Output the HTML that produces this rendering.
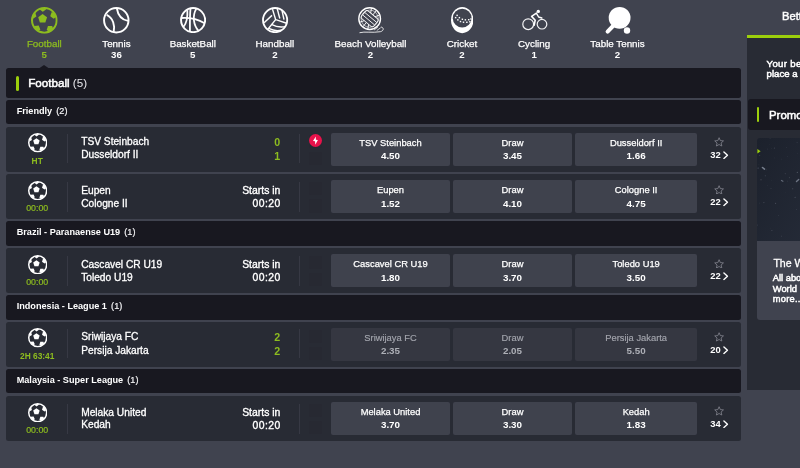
<!DOCTYPE html><html><head><meta charset="utf-8"><title>Sportsbook</title><style>
html,body{margin:0;padding:0;}body{width:800px;height:468px;overflow:hidden;background:#40434f;font-family:"Liberation Sans",Arial,sans-serif;position:relative;}
#pg{position:absolute;left:0;top:0;width:800px;height:468px;overflow:hidden;will-change:transform;}
.b{position:absolute;box-sizing:border-box}.t{position:absolute;white-space:nowrap;box-sizing:border-box}
</style></head><body><div id="pg">
<svg width="0" height="0" style="position:absolute"><defs><symbol id="fb" viewBox="0 0 100 100"><circle cx="50" cy="50" r="46.2" fill="none" stroke="currentColor" stroke-width="7.6"/><polygon points="43.5,26.5 60.1,38.6 53.8,58.2 33.2,58.2 26.9,38.6" fill="currentColor"/><clipPath id="fbc"><circle cx="50" cy="50" r="46"/></clipPath><g clip-path="url(#fbc)" fill="currentColor"><polygon points="72.1,34.8 77.1,19.7 92.9,19.7 97.8,34.8 85.0,44.1"/><polygon points="63.5,71.1 79.4,70.9 84.4,86.0 71.6,95.4 58.7,86.2"/><polygon points="28.7,69.5 35.1,84.1 23.3,94.6 9.6,86.7 12.9,71.2"/><polygon points="20.2,35.7 7.6,44.3 -4.5,34.9 0.6,20.6 15.9,21.0"/><polygon points="44.2,17.8 32.5,8.9 37.4,-5.0 52.1,-4.6 56.3,9.5"/></g></symbol><symbol id="star" viewBox="0 0 100 98"><path d="M50 7 L62.5 36 L94 39 L70 60 L77.5 91 L50 75 L22.5 91 L30 60 L6 39 L37.5 36 Z" fill="none" stroke="#858791" stroke-width="8" stroke-linejoin="round"/></symbol><symbol id="chev" viewBox="0 0 6 9"><path d="M1 1 L4.8 4.5 L1 8" fill="none" stroke="#fff" stroke-width="1.5" stroke-linecap="round" stroke-linejoin="round"/></symbol></defs></svg>
<div class="t" style="top:37px;height:13px;line-height:13px;font-size:9.8px;color:#8dbc1f;-webkit-text-stroke:0.25px #8dbc1f;left:-105.7px;width:300px;text-align:center;">Football</div>
<div class="t" style="top:48px;height:13px;line-height:13px;font-size:9.7px;color:#8dbc1f;font-weight:700;left:-105.7px;width:300px;text-align:center;">5</div>
<div class="t" style="top:37px;height:13px;line-height:13px;font-size:9.8px;color:#fff;-webkit-text-stroke:0.25px #fff;left:-33.6px;width:300px;text-align:center;">Tennis</div>
<div class="t" style="top:48px;height:13px;line-height:13px;font-size:9.7px;color:#fff;font-weight:700;left:-33.6px;width:300px;text-align:center;">36</div>
<div class="t" style="top:37px;height:13px;line-height:13px;font-size:9.8px;color:#fff;-webkit-text-stroke:0.25px #fff;left:42.8px;width:300px;text-align:center;">BasketBall</div>
<div class="t" style="top:48px;height:13px;line-height:13px;font-size:9.7px;color:#fff;font-weight:700;left:42.8px;width:300px;text-align:center;">5</div>
<div class="t" style="top:37px;height:13px;line-height:13px;font-size:9.8px;color:#fff;-webkit-text-stroke:0.25px #fff;left:124.9px;width:300px;text-align:center;">Handball</div>
<div class="t" style="top:48px;height:13px;line-height:13px;font-size:9.7px;color:#fff;font-weight:700;left:124.9px;width:300px;text-align:center;">2</div>
<div class="t" style="top:37px;height:13px;line-height:13px;font-size:9.8px;color:#fff;-webkit-text-stroke:0.25px #fff;left:220.5px;width:300px;text-align:center;">Beach Volleyball</div>
<div class="t" style="top:48px;height:13px;line-height:13px;font-size:9.7px;color:#fff;font-weight:700;left:220.5px;width:300px;text-align:center;">2</div>
<div class="t" style="top:37px;height:13px;line-height:13px;font-size:9.8px;color:#fff;-webkit-text-stroke:0.25px #fff;left:312px;width:300px;text-align:center;">Cricket</div>
<div class="t" style="top:48px;height:13px;line-height:13px;font-size:9.7px;color:#fff;font-weight:700;left:312px;width:300px;text-align:center;">2</div>
<div class="t" style="top:37px;height:13px;line-height:13px;font-size:9.8px;color:#fff;-webkit-text-stroke:0.25px #fff;left:384.1px;width:300px;text-align:center;">Cycling</div>
<div class="t" style="top:48px;height:13px;line-height:13px;font-size:9.7px;color:#fff;font-weight:700;left:384.1px;width:300px;text-align:center;">1</div>
<div class="t" style="top:37px;height:13px;line-height:13px;font-size:9.8px;color:#fff;-webkit-text-stroke:0.25px #fff;left:467.5px;width:300px;text-align:center;">Table Tennis</div>
<div class="t" style="top:48px;height:13px;line-height:13px;font-size:9.7px;color:#fff;font-weight:700;left:467.5px;width:300px;text-align:center;">2</div>
<svg class="b" style="left:31.1px;top:7.1px;color:#8dbc1f" width="26.7" height="26.7"><use href="#fb"/></svg>
<svg class="b" style="left:103.3px;top:7px" width="26.6" height="26.6" viewBox="0 0 100 100"><g fill="none" stroke="#fff" stroke-width="7.2"><circle cx="50" cy="50" r="46"/><path d="M14 30 C38 42 46 70 40 94"/><path d="M52 5 C56 30 72 48 94 52"/></g></svg>
<svg class="b" style="left:180.2px;top:7px" width="26.2" height="26.2" viewBox="0 0 100 100"><g fill="none" stroke="#fff" stroke-width="6.8"><circle cx="50" cy="50" r="46" stroke-width="7.4"/><path d="M40 6 C37 40 38 70 38 95"/><path d="M6 42 C40 40 70 48 94 62"/><path d="M62 7 C46 34 52 70 70 90"/><path d="M28 12 C30 40 22 66 12 78"/></g></svg>
<svg class="b" style="left:262.4px;top:7px" width="26.2" height="26.2" viewBox="0 0 100 100"><g fill="none" stroke="#fff" stroke-width="5.4"><circle cx="50" cy="50" r="46.2" stroke-width="7"/><path d="M40 8 L52 48 L94 62"/><path d="M52 48 L20 88"/><path d="M58 6 L68 44"/><path d="M76 12 L84 48"/><path d="M8 60 L38 32"/><path d="M36 66 C55 76 75 78 90 74"/><path d="M26 82 C45 92 62 92 76 88"/></g></svg>
<svg class="b" style="left:357.5px;top:7px" width="28.2" height="27.5" viewBox="0 0 121 118"><g fill="none" stroke="#fff"><circle cx="50" cy="50" r="46.5" stroke-width="6"/><circle cx="50" cy="50" r="37" stroke-width="2.6"/><path d="M53.1 32.3 L57.8 5.7" stroke-width="4"/><path d="M61.6 36.2 L78.9 15.5" stroke-width="4"/><path d="M66.9 43.8 L92.3 34.6" stroke-width="4"/><path d="M46.9 67.7 L42.2 94.3" stroke-width="4"/><path d="M38.4 63.8 L21.1 84.5" stroke-width="4"/><path d="M33.1 56.2 L7.7 65.4" stroke-width="4"/><g transform="rotate(40 50 50)"><rect x="16" y="28.5" width="68" height="43" rx="9" fill="#40434f" stroke-width="4"/><path d="M17 43 H83 M17 57 H83" stroke-width="3.6"/></g><path d="M8 110 C30 104 60 112 96 106 C112 102 112 88 100 86" stroke-width="3.6" stroke-linecap="round"/><path d="M70 98 L84 88 M82 100 L96 90" stroke-width="3" stroke-linecap="round"/></g></svg>
<svg class="b" style="left:451px;top:7.4px" width="22.4" height="26.2" viewBox="0 0 90 105"><ellipse cx="45" cy="52.5" rx="45" ry="52.5" fill="#fff"/><circle cx="45" cy="44.6" r="37.8" fill="#40434f"/><g fill="#fff"><rect x="21.7" y="30.7" width="5.8" height="5.8"/><rect x="30.8" y="39.7" width="5.8" height="5.8"/><rect x="42.8" y="46.3" width="5.8" height="5.8"/><rect x="54.9" y="48.6" width="5.8" height="5.8"/><rect x="68.4" y="48.1" width="5.8" height="5.8"/><rect x="77.5" y="45.1" width="5.8" height="5.8"/><rect x="15.7" y="39.7" width="5.8" height="5.8"/><rect x="24.7" y="48.7" width="5.8" height="5.8"/><rect x="35.3" y="55.4" width="5.8" height="5.8"/><rect x="47.3" y="58.1" width="5.8" height="5.8"/><rect x="60.9" y="58.4" width="5.8" height="5.8"/><rect x="73.0" y="56.4" width="5.8" height="5.8"/></g></svg>
<svg class="b" style="left:521px;top:8px" width="28" height="24" viewBox="0 0 28 24"><g fill="none" stroke="#f2f2f4" stroke-width="1.2"><circle cx="7.2" cy="16.2" r="5.4"/><circle cx="21" cy="16.2" r="4.8"/></g><circle cx="17.3" cy="3.4" r="1.7" fill="#fff"/><path d="M15.4 5.2 L10.6 8.4 L14.2 12.2 L13.2 17.2" fill="none" stroke="#fff" stroke-width="1.6" stroke-linejoin="round" stroke-linecap="round"/><path d="M15.6 5.6 L17.6 9 L20.8 10" fill="none" stroke="#fff" stroke-width="1.4" stroke-linecap="round" stroke-linejoin="round"/></svg>
<svg class="b" style="left:604px;top:6px" width="30" height="30" viewBox="0 0 30 30"><circle cx="15.6" cy="11.8" r="10.9" fill="#fff"/><path d="M9.5 19.5 L3.6 25.6" stroke="#fff" stroke-width="4" stroke-linecap="round"/><circle cx="23" cy="24.5" r="3.2" fill="#fff"/></svg>
<svg class="b" style="left:39.3px;top:64.8px" width="10" height="3.4" viewBox="0 0 10 3.4"><path d="M0 3.4 L5 0 L10 3.4 Z" fill="#181820"/></svg>
<div class="b" style="left:6.3px;top:68px;width:734.7px;height:29.85px;background:#181820;border-radius:2.5px;"></div>
<div class="b" style="left:15.6px;top:75.6px;width:3px;height:15.6px;background:#9ccf0c;border-radius:1.5px;"></div>
<div class="t" style="top:75px;height:15px;line-height:15px;font-size:11.65px;color:#fff;-webkit-text-stroke:0.5px #fff;left:28.2px;">Football <span style="color:#e6e6ea;-webkit-text-stroke:0">(5)</span></div>
<div class="b" style="left:6.3px;top:100.1px;width:734.7px;height:24.4px;background:#181820;border-radius:2.5px;"></div>
<div class="t" style="top:105px;height:12px;line-height:12px;font-size:9.15px;color:#fff;left:16.7px;"><b>Friendly</b> <span style="margin-left:1.6px;-webkit-text-stroke:0.2px #f4f4f6;color:#f4f4f6">(2)</span></div>
<div class="b" style="left:6.3px;top:126.7px;width:734.7px;height:45.1px;background:#282b34;border-radius:2.5px;"></div>
<svg class="b" style="left:27.9px;top:133.3px;color:#fff" width="19.4" height="19.4"><use href="#fb"/></svg>
<div class="t" style="top:155px;height:12px;line-height:12px;font-size:8.4px;color:#8dbc1f;font-weight:700;left:-112.8px;width:300px;text-align:center;">HT</div>
<div class="b" style="left:67.0px;top:133.9px;width:1px;height:29.4px;background:#373944;"></div>
<div class="t" style="top:135px;height:13px;line-height:13px;font-size:10.2px;color:#fff;-webkit-text-stroke:0.3px #fff;left:81.2px;">TSV Steinbach</div>
<div class="t" style="top:148px;height:13px;line-height:13px;font-size:10.2px;color:#fff;-webkit-text-stroke:0.3px #fff;left:81.2px;">Dusseldorf II</div>
<div class="t" style="top:135px;height:14px;line-height:14px;font-size:10.7px;color:#8dbc1f;font-weight:700;right:519.7px;text-align:right;">0</div>
<div class="t" style="top:149px;height:14px;line-height:14px;font-size:10.7px;color:#8dbc1f;font-weight:700;right:519.7px;text-align:right;">1</div>
<div class="b" style="left:299.2px;top:133.9px;width:1px;height:29.4px;background:#373944;"></div>
<div class="b" style="left:308.9px;top:134.55px;width:13.3px;height:13.3px;background:#272932;border-radius:2px;"></div>
<div class="b" style="left:308.9px;top:152.0px;width:13.3px;height:13.3px;background:#272932;border-radius:2px;"></div>
<svg class="b" style="left:308.8px;top:133.9px" width="13" height="13" viewBox="0 0 26 26"><circle cx="13" cy="13" r="13" fill="#e8124b"/><path d="M13.6 5 L8 14 L12.1 14.5 L12.6 21.6 L17.8 12.2 L13.7 11.7 Z" fill="#fff"/></svg>
<div class="b" style="left:331px;top:132.75px;width:119px;height:33.1px;background:#3f424d;border-radius:2px;"></div>
<div class="t" style="top:137px;height:12px;line-height:12px;font-size:9.35px;color:#fff;-webkit-text-stroke:0.25px #fff;left:240.5px;width:300px;text-align:center;">TSV Steinbach</div>
<div class="t" style="top:149px;height:13px;line-height:13px;font-size:9.8px;color:#fff;font-weight:700;left:240.5px;width:300px;text-align:center;">4.50</div>
<div class="b" style="left:453px;top:132.75px;width:119px;height:33.1px;background:#3f424d;border-radius:2px;"></div>
<div class="t" style="top:137px;height:12px;line-height:12px;font-size:9.35px;color:#fff;-webkit-text-stroke:0.25px #fff;left:362.5px;width:300px;text-align:center;">Draw</div>
<div class="t" style="top:149px;height:13px;line-height:13px;font-size:9.8px;color:#fff;font-weight:700;left:362.5px;width:300px;text-align:center;">3.45</div>
<div class="b" style="left:575px;top:132.75px;width:122.3px;height:33.1px;background:#3f424d;border-radius:2px;"></div>
<div class="t" style="top:137px;height:12px;line-height:12px;font-size:9.35px;color:#fff;-webkit-text-stroke:0.25px #fff;left:486.15px;width:300px;text-align:center;">Dusseldorf II</div>
<div class="t" style="top:149px;height:13px;line-height:13px;font-size:9.8px;color:#fff;font-weight:700;left:486.15px;width:300px;text-align:center;">1.66</div>
<svg class="b" style="left:713.8px;top:137.3px" width="10.2" height="9.8"><use href="#star"/></svg>
<div class="t" style="top:148px;height:13px;line-height:13px;font-size:9.4px;color:#fff;font-weight:700;left:710.2px;">32</div>
<svg class="b" style="left:723.2px;top:151.1px" width="5.6" height="8.4"><use href="#chev"/></svg>
<div class="b" style="left:6.3px;top:174.0px;width:734.7px;height:45.1px;background:#282b34;border-radius:2.5px;"></div>
<svg class="b" style="left:27.9px;top:180.9px;color:#fff" width="19.4" height="19.4"><use href="#fb"/></svg>
<div class="t" style="top:202px;height:12px;line-height:12px;font-size:8.8px;color:#8dbc1f;-webkit-text-stroke:0.2px #8dbc1f;left:-112.8px;width:300px;text-align:center;">00:00</div>
<div class="b" style="left:67.0px;top:181.85px;width:1px;height:30.5px;background:#373944;"></div>
<div class="t" style="top:184px;height:13px;line-height:13px;font-size:10.2px;color:#fff;-webkit-text-stroke:0.3px #fff;left:81.2px;">Eupen</div>
<div class="t" style="top:197px;height:13px;line-height:13px;font-size:10.2px;color:#fff;-webkit-text-stroke:0.3px #fff;left:81.2px;">Cologne II</div>
<div class="t" style="top:184px;height:13px;line-height:13px;font-size:10.4px;color:#fff;-webkit-text-stroke:0.35px #fff;right:519.7px;text-align:right;">Starts in</div>
<div class="t" style="top:197px;height:13px;line-height:13px;font-size:10.4px;color:#fff;-webkit-text-stroke:0.35px #fff;right:519.3px;text-align:right;letter-spacing:0.45px;">00:20</div>
<div class="b" style="left:299.2px;top:181.85px;width:1px;height:30.5px;background:#373944;"></div>
<div class="b" style="left:308.9px;top:181.85px;width:13.3px;height:13.3px;background:#272932;border-radius:2px;"></div>
<div class="b" style="left:308.9px;top:199.3px;width:13.3px;height:13.3px;background:#272932;border-radius:2px;"></div>
<div class="b" style="left:331px;top:180.05px;width:119px;height:33.1px;background:#3f424d;border-radius:2px;"></div>
<div class="t" style="top:184px;height:12px;line-height:12px;font-size:9.35px;color:#fff;-webkit-text-stroke:0.25px #fff;left:240.5px;width:300px;text-align:center;">Eupen</div>
<div class="t" style="top:197px;height:13px;line-height:13px;font-size:9.8px;color:#fff;font-weight:700;left:240.5px;width:300px;text-align:center;">1.52</div>
<div class="b" style="left:453px;top:180.05px;width:119px;height:33.1px;background:#3f424d;border-radius:2px;"></div>
<div class="t" style="top:184px;height:12px;line-height:12px;font-size:9.35px;color:#fff;-webkit-text-stroke:0.25px #fff;left:362.5px;width:300px;text-align:center;">Draw</div>
<div class="t" style="top:197px;height:13px;line-height:13px;font-size:9.8px;color:#fff;font-weight:700;left:362.5px;width:300px;text-align:center;">4.10</div>
<div class="b" style="left:575px;top:180.05px;width:122.3px;height:33.1px;background:#3f424d;border-radius:2px;"></div>
<div class="t" style="top:184px;height:12px;line-height:12px;font-size:9.35px;color:#fff;-webkit-text-stroke:0.25px #fff;left:486.15px;width:300px;text-align:center;">Cologne II</div>
<div class="t" style="top:197px;height:13px;line-height:13px;font-size:9.8px;color:#fff;font-weight:700;left:486.15px;width:300px;text-align:center;">4.75</div>
<svg class="b" style="left:713.8px;top:184.6px" width="10.2" height="9.8"><use href="#star"/></svg>
<div class="t" style="top:195px;height:13px;line-height:13px;font-size:9.4px;color:#fff;font-weight:700;left:710.2px;">22</div>
<svg class="b" style="left:723.2px;top:198.4px" width="5.6" height="8.4"><use href="#chev"/></svg>
<div class="b" style="left:6.3px;top:221.3px;width:734.7px;height:24.4px;background:#181820;border-radius:2.5px;"></div>
<div class="t" style="top:226px;height:12px;line-height:12px;font-size:9.15px;color:#fff;left:16.7px;"><b>Brazil - Paranaense U19</b> <span style="margin-left:1.6px;-webkit-text-stroke:0.2px #f4f4f6;color:#f4f4f6">(1)</span></div>
<div class="b" style="left:6.3px;top:247.9px;width:734.7px;height:45.1px;background:#282b34;border-radius:2.5px;"></div>
<svg class="b" style="left:27.9px;top:254.8px;color:#fff" width="19.4" height="19.4"><use href="#fb"/></svg>
<div class="t" style="top:276px;height:12px;line-height:12px;font-size:8.8px;color:#8dbc1f;-webkit-text-stroke:0.2px #8dbc1f;left:-112.8px;width:300px;text-align:center;">00:00</div>
<div class="b" style="left:67.0px;top:255.75px;width:1px;height:30.5px;background:#373944;"></div>
<div class="t" style="top:258px;height:13px;line-height:13px;font-size:10.2px;color:#fff;-webkit-text-stroke:0.3px #fff;left:81.2px;">Cascavel CR U19</div>
<div class="t" style="top:271px;height:13px;line-height:13px;font-size:10.2px;color:#fff;-webkit-text-stroke:0.3px #fff;left:81.2px;">Toledo U19</div>
<div class="t" style="top:258px;height:13px;line-height:13px;font-size:10.4px;color:#fff;-webkit-text-stroke:0.35px #fff;right:519.7px;text-align:right;">Starts in</div>
<div class="t" style="top:271px;height:13px;line-height:13px;font-size:10.4px;color:#fff;-webkit-text-stroke:0.35px #fff;right:519.3px;text-align:right;letter-spacing:0.45px;">00:20</div>
<div class="b" style="left:299.2px;top:255.75px;width:1px;height:30.5px;background:#373944;"></div>
<div class="b" style="left:308.9px;top:255.75px;width:13.3px;height:13.3px;background:#272932;border-radius:2px;"></div>
<div class="b" style="left:308.9px;top:273.2px;width:13.3px;height:13.3px;background:#272932;border-radius:2px;"></div>
<div class="b" style="left:331px;top:253.95px;width:119px;height:33.1px;background:#3f424d;border-radius:2px;"></div>
<div class="t" style="top:258px;height:12px;line-height:12px;font-size:9.35px;color:#fff;-webkit-text-stroke:0.25px #fff;left:240.5px;width:300px;text-align:center;">Cascavel CR U19</div>
<div class="t" style="top:271px;height:13px;line-height:13px;font-size:9.8px;color:#fff;font-weight:700;left:240.5px;width:300px;text-align:center;">1.80</div>
<div class="b" style="left:453px;top:253.95px;width:119px;height:33.1px;background:#3f424d;border-radius:2px;"></div>
<div class="t" style="top:258px;height:12px;line-height:12px;font-size:9.35px;color:#fff;-webkit-text-stroke:0.25px #fff;left:362.5px;width:300px;text-align:center;">Draw</div>
<div class="t" style="top:271px;height:13px;line-height:13px;font-size:9.8px;color:#fff;font-weight:700;left:362.5px;width:300px;text-align:center;">3.70</div>
<div class="b" style="left:575px;top:253.95px;width:122.3px;height:33.1px;background:#3f424d;border-radius:2px;"></div>
<div class="t" style="top:258px;height:12px;line-height:12px;font-size:9.35px;color:#fff;-webkit-text-stroke:0.25px #fff;left:486.15px;width:300px;text-align:center;">Toledo U19</div>
<div class="t" style="top:271px;height:13px;line-height:13px;font-size:9.8px;color:#fff;font-weight:700;left:486.15px;width:300px;text-align:center;">3.50</div>
<svg class="b" style="left:713.8px;top:258.5px" width="10.2" height="9.8"><use href="#star"/></svg>
<div class="t" style="top:269px;height:13px;line-height:13px;font-size:9.4px;color:#fff;font-weight:700;left:710.2px;">22</div>
<svg class="b" style="left:723.2px;top:272.3px" width="5.6" height="8.4"><use href="#chev"/></svg>
<div class="b" style="left:6.3px;top:295.2px;width:734.7px;height:24.4px;background:#181820;border-radius:2.5px;"></div>
<div class="t" style="top:300px;height:12px;line-height:12px;font-size:9.15px;color:#fff;left:16.7px;"><b>Indonesia - League 1</b> <span style="margin-left:1.6px;-webkit-text-stroke:0.2px #f4f4f6;color:#f4f4f6">(1)</span></div>
<div class="b" style="left:6.3px;top:321.8px;width:734.7px;height:45.1px;background:#282b34;border-radius:2.5px;"></div>
<svg class="b" style="left:27.9px;top:328.4px;color:#fff" width="19.4" height="19.4"><use href="#fb"/></svg>
<div class="t" style="top:350px;height:12px;line-height:12px;font-size:8.4px;color:#8dbc1f;font-weight:700;left:-112.8px;width:300px;text-align:center;">2H 63:41</div>
<div class="b" style="left:67.0px;top:329.0px;width:1px;height:29.4px;background:#373944;"></div>
<div class="t" style="top:330px;height:13px;line-height:13px;font-size:10.2px;color:#fff;-webkit-text-stroke:0.3px #fff;left:81.2px;">Sriwijaya FC</div>
<div class="t" style="top:344px;height:13px;line-height:13px;font-size:10.2px;color:#fff;-webkit-text-stroke:0.3px #fff;left:81.2px;">Persija Jakarta</div>
<div class="t" style="top:330px;height:14px;line-height:14px;font-size:10.7px;color:#8dbc1f;font-weight:700;right:519.7px;text-align:right;">2</div>
<div class="t" style="top:344px;height:14px;line-height:14px;font-size:10.7px;color:#8dbc1f;font-weight:700;right:519.7px;text-align:right;">2</div>
<div class="b" style="left:299.2px;top:329.0px;width:1px;height:29.4px;background:#373944;"></div>
<div class="b" style="left:308.9px;top:329.65px;width:13.3px;height:13.3px;background:#272932;border-radius:2px;"></div>
<div class="b" style="left:308.9px;top:347.1px;width:13.3px;height:13.3px;background:#272932;border-radius:2px;"></div>
<div class="b" style="left:331px;top:327.85px;width:119px;height:33.1px;background:#353741;border-radius:2px;"></div>
<div class="t" style="top:332px;height:12px;line-height:12px;font-size:9.35px;color:#a3a5ad;-webkit-text-stroke:0.15px #a3a5ad;left:240.5px;width:300px;text-align:center;">Sriwijaya FC</div>
<div class="t" style="top:344px;height:13px;line-height:13px;font-size:9.8px;color:#adafb6;font-weight:700;left:240.5px;width:300px;text-align:center;">2.35</div>
<div class="b" style="left:453px;top:327.85px;width:119px;height:33.1px;background:#353741;border-radius:2px;"></div>
<div class="t" style="top:332px;height:12px;line-height:12px;font-size:9.35px;color:#a3a5ad;-webkit-text-stroke:0.15px #a3a5ad;left:362.5px;width:300px;text-align:center;">Draw</div>
<div class="t" style="top:344px;height:13px;line-height:13px;font-size:9.8px;color:#adafb6;font-weight:700;left:362.5px;width:300px;text-align:center;">2.05</div>
<div class="b" style="left:575px;top:327.85px;width:122.3px;height:33.1px;background:#353741;border-radius:2px;"></div>
<div class="t" style="top:332px;height:12px;line-height:12px;font-size:9.35px;color:#a3a5ad;-webkit-text-stroke:0.15px #a3a5ad;left:486.15px;width:300px;text-align:center;">Persija Jakarta</div>
<div class="t" style="top:344px;height:13px;line-height:13px;font-size:9.8px;color:#adafb6;font-weight:700;left:486.15px;width:300px;text-align:center;">5.50</div>
<svg class="b" style="left:713.8px;top:332.4px" width="10.2" height="9.8"><use href="#star"/></svg>
<div class="t" style="top:343px;height:13px;line-height:13px;font-size:9.4px;color:#fff;font-weight:700;left:710.2px;">20</div>
<svg class="b" style="left:723.2px;top:346.2px" width="5.6" height="8.4"><use href="#chev"/></svg>
<div class="b" style="left:6.3px;top:369.1px;width:734.7px;height:24.4px;background:#181820;border-radius:2.5px;"></div>
<div class="t" style="top:374px;height:12px;line-height:12px;font-size:9.15px;color:#fff;left:16.7px;"><b>Malaysia - Super League</b> <span style="margin-left:1.6px;-webkit-text-stroke:0.2px #f4f4f6;color:#f4f4f6">(1)</span></div>
<div class="b" style="left:6.3px;top:395.7px;width:734.7px;height:45.1px;background:#282b34;border-radius:2.5px;"></div>
<svg class="b" style="left:27.9px;top:402.6px;color:#fff" width="19.4" height="19.4"><use href="#fb"/></svg>
<div class="t" style="top:424px;height:12px;line-height:12px;font-size:8.8px;color:#8dbc1f;-webkit-text-stroke:0.2px #8dbc1f;left:-112.8px;width:300px;text-align:center;">00:00</div>
<div class="b" style="left:67.0px;top:403.55px;width:1px;height:30.5px;background:#373944;"></div>
<div class="t" style="top:406px;height:13px;line-height:13px;font-size:10.2px;color:#fff;-webkit-text-stroke:0.3px #fff;left:81.2px;">Melaka United</div>
<div class="t" style="top:418px;height:13px;line-height:13px;font-size:10.2px;color:#fff;-webkit-text-stroke:0.3px #fff;left:81.2px;">Kedah</div>
<div class="t" style="top:406px;height:13px;line-height:13px;font-size:10.4px;color:#fff;-webkit-text-stroke:0.35px #fff;right:519.7px;text-align:right;">Starts in</div>
<div class="t" style="top:419px;height:13px;line-height:13px;font-size:10.4px;color:#fff;-webkit-text-stroke:0.35px #fff;right:519.3px;text-align:right;letter-spacing:0.45px;">00:20</div>
<div class="b" style="left:299.2px;top:403.55px;width:1px;height:30.5px;background:#373944;"></div>
<div class="b" style="left:308.9px;top:403.55px;width:13.3px;height:13.3px;background:#272932;border-radius:2px;"></div>
<div class="b" style="left:308.9px;top:421.0px;width:13.3px;height:13.3px;background:#272932;border-radius:2px;"></div>
<div class="b" style="left:331px;top:401.75px;width:119px;height:33.1px;background:#3f424d;border-radius:2px;"></div>
<div class="t" style="top:406px;height:12px;line-height:12px;font-size:9.35px;color:#fff;-webkit-text-stroke:0.25px #fff;left:240.5px;width:300px;text-align:center;">Melaka United</div>
<div class="t" style="top:418px;height:13px;line-height:13px;font-size:9.8px;color:#fff;font-weight:700;left:240.5px;width:300px;text-align:center;">3.70</div>
<div class="b" style="left:453px;top:401.75px;width:119px;height:33.1px;background:#3f424d;border-radius:2px;"></div>
<div class="t" style="top:406px;height:12px;line-height:12px;font-size:9.35px;color:#fff;-webkit-text-stroke:0.25px #fff;left:362.5px;width:300px;text-align:center;">Draw</div>
<div class="t" style="top:418px;height:13px;line-height:13px;font-size:9.8px;color:#fff;font-weight:700;left:362.5px;width:300px;text-align:center;">3.30</div>
<div class="b" style="left:575px;top:401.75px;width:122.3px;height:33.1px;background:#3f424d;border-radius:2px;"></div>
<div class="t" style="top:406px;height:12px;line-height:12px;font-size:9.35px;color:#fff;-webkit-text-stroke:0.25px #fff;left:486.15px;width:300px;text-align:center;">Kedah</div>
<div class="t" style="top:418px;height:13px;line-height:13px;font-size:9.8px;color:#fff;font-weight:700;left:486.15px;width:300px;text-align:center;">1.83</div>
<svg class="b" style="left:713.8px;top:406.3px" width="10.2" height="9.8"><use href="#star"/></svg>
<div class="t" style="top:417px;height:13px;line-height:13px;font-size:9.4px;color:#fff;font-weight:700;left:710.2px;">34</div>
<svg class="b" style="left:723.2px;top:420.1px" width="5.6" height="8.4"><use href="#chev"/></svg>
<div class="b" style="left:747.1px;top:37px;width:54.9px;height:352.6px;background:#282b34;"></div>
<div class="t" style="top:9px;height:14px;line-height:14px;font-size:11.2px;color:#fff;-webkit-text-stroke:0.45px #fff;left:782px;">Betting Slip</div>
<div class="b" style="left:747.1px;top:35.4px;width:54.9px;height:3.1px;background:#9ccf0c;"></div>
<div class="t" style="top:57px;height:13px;line-height:13px;font-size:9.6px;color:#fff;-webkit-text-stroke:0.5px #fff;left:766.6px;letter-spacing:0.33px;">Your betslip is empty,</div>
<div class="t" style="top:67px;height:13px;line-height:13px;font-size:9.6px;color:#fff;-webkit-text-stroke:0.5px #fff;left:766.6px;">place a bet</div>
<div class="b" style="left:748px;top:99.1px;width:60px;height:30.5px;background:#181820;border-radius:3px;"></div>
<div class="b" style="left:756.7px;top:107px;width:2.7px;height:15px;background:#9ccf0c;border-radius:1.35px;"></div>
<div class="t" style="top:108px;height:14px;line-height:14px;font-size:11.4px;color:#fff;-webkit-text-stroke:0.5px #fff;left:769px;">Promotions</div>
<div class="b" style="left:757px;top:138.3px;width:60px;height:181.3px;background:#40434f;border-radius:3px;"></div>
<div class="b" style="left:757px;top:138.3px;width:60px;height:103px;border-top-left-radius:3px;overflow:hidden;background:#1f242f">
<svg width="60" height="104" viewBox="0 0 60 104" style="position:absolute;left:0;top:0"><defs><linearGradient id="pg1" x1="0" y1="0" x2="1" y2="1"><stop offset="0" stop-color="#1c212c"/><stop offset="1" stop-color="#252b38"/></linearGradient></defs><rect width="60" height="104" fill="url(#pg1)"/><circle cx="14.2" cy="10.7" r="0.39" fill="#cfd6e4" opacity="0.13"/><circle cx="4.0" cy="41.8" r="0.57" fill="#cfd6e4" opacity="0.28"/><circle cx="45.9" cy="23.1" r="0.44" fill="#cfd6e4" opacity="0.16"/><circle cx="10.4" cy="11.0" r="0.33" fill="#cfd6e4" opacity="0.30"/><circle cx="49.7" cy="83.9" r="0.53" fill="#cfd6e4" opacity="0.14"/><circle cx="18.6" cy="65.2" r="0.51" fill="#cfd6e4" opacity="0.29"/><circle cx="52.8" cy="9.0" r="0.46" fill="#cfd6e4" opacity="0.25"/><circle cx="30.4" cy="18.5" r="0.42" fill="#cfd6e4" opacity="0.12"/><circle cx="56.1" cy="90.0" r="0.44" fill="#cfd6e4" opacity="0.17"/><circle cx="54.5" cy="59.5" r="0.56" fill="#cfd6e4" opacity="0.29"/><circle cx="30.5" cy="43.1" r="0.46" fill="#cfd6e4" opacity="0.19"/><circle cx="9.7" cy="31.7" r="0.53" fill="#cfd6e4" opacity="0.11"/><circle cx="2.8" cy="65.1" r="0.35" fill="#cfd6e4" opacity="0.22"/><circle cx="28.3" cy="35.7" r="0.60" fill="#cfd6e4" opacity="0.14"/><circle cx="24.8" cy="21.1" r="0.47" fill="#cfd6e4" opacity="0.16"/><circle cx="21.3" cy="77.7" r="0.36" fill="#cfd6e4" opacity="0.22"/><circle cx="54.3" cy="10.5" r="0.27" fill="#cfd6e4" opacity="0.15"/><circle cx="45.9" cy="64.0" r="0.33" fill="#cfd6e4" opacity="0.17"/><circle cx="10.7" cy="47.7" r="0.26" fill="#cfd6e4" opacity="0.25"/><circle cx="53.8" cy="99.3" r="0.51" fill="#cfd6e4" opacity="0.31"/><circle cx="1.1" cy="30.1" r="0.59" fill="#cfd6e4" opacity="0.27"/><circle cx="24.6" cy="98.1" r="0.47" fill="#cfd6e4" opacity="0.28"/><circle cx="17.6" cy="19.9" r="0.41" fill="#cfd6e4" opacity="0.13"/><circle cx="22.9" cy="100.0" r="0.37" fill="#cfd6e4" opacity="0.10"/><circle cx="2.7" cy="17.6" r="0.52" fill="#cfd6e4" opacity="0.18"/><circle cx="17.4" cy="10.1" r="0.59" fill="#cfd6e4" opacity="0.19"/><circle cx="12.5" cy="6.2" r="0.27" fill="#cfd6e4" opacity="0.14"/><circle cx="40.6" cy="15.6" r="0.26" fill="#cfd6e4" opacity="0.21"/><circle cx="14.9" cy="103.8" r="0.29" fill="#cfd6e4" opacity="0.22"/><circle cx="46.4" cy="42.6" r="0.60" fill="#cfd6e4" opacity="0.21"/><circle cx="14.5" cy="42.7" r="0.26" fill="#cfd6e4" opacity="0.19"/><circle cx="14.9" cy="92.5" r="0.54" fill="#cfd6e4" opacity="0.21"/><circle cx="1.9" cy="26.5" r="0.33" fill="#cfd6e4" opacity="0.15"/><circle cx="13.9" cy="90.4" r="0.30" fill="#cfd6e4" opacity="0.11"/><circle cx="55.7" cy="58.8" r="0.60" fill="#cfd6e4" opacity="0.19"/><circle cx="54.1" cy="68.0" r="0.53" fill="#cfd6e4" opacity="0.26"/><circle cx="29.7" cy="9.7" r="0.32" fill="#cfd6e4" opacity="0.29"/><circle cx="54.0" cy="96.2" r="0.37" fill="#cfd6e4" opacity="0.24"/><circle cx="48.0" cy="66.8" r="0.54" fill="#cfd6e4" opacity="0.22"/><circle cx="39.3" cy="71.3" r="0.34" fill="#cfd6e4" opacity="0.30"/><circle cx="57.4" cy="7.7" r="0.59" fill="#cfd6e4" opacity="0.31"/><circle cx="40.1" cy="4.6" r="0.56" fill="#cfd6e4" opacity="0.13"/><circle cx="58.1" cy="69.4" r="0.27" fill="#cfd6e4" opacity="0.14"/><circle cx="38.1" cy="59.2" r="0.51" fill="#cfd6e4" opacity="0.30"/><circle cx="13.1" cy="0.3" r="0.57" fill="#cfd6e4" opacity="0.10"/><circle cx="52.6" cy="12.1" r="0.53" fill="#cfd6e4" opacity="0.27"/><circle cx="52.7" cy="57.3" r="0.56" fill="#cfd6e4" opacity="0.14"/><circle cx="40.3" cy="34.4" r="0.56" fill="#cfd6e4" opacity="0.27"/><circle cx="28.3" cy="54.7" r="0.26" fill="#cfd6e4" opacity="0.11"/><circle cx="35.7" cy="50.8" r="0.55" fill="#cfd6e4" opacity="0.23"/><circle cx="8.3" cy="37.7" r="0.52" fill="#cfd6e4" opacity="0.22"/><circle cx="0.6" cy="87.1" r="0.54" fill="#cfd6e4" opacity="0.12"/><circle cx="32.6" cy="39.6" r="0.53" fill="#cfd6e4" opacity="0.17"/><circle cx="14.0" cy="50.6" r="0.59" fill="#cfd6e4" opacity="0.12"/><circle cx="6.9" cy="64.6" r="0.56" fill="#cfd6e4" opacity="0.21"/><path d="M5.5 29.5 l2 1.6" stroke="#8e96a6" stroke-width="1.6" stroke-linecap="round" opacity=".8"/><path d="M39.5 43.5 l2.2 -2" stroke="#8e96a6" stroke-width="1.4" stroke-linecap="round" opacity=".7"/><path d="M24.5 42.5 l1.4 .8" stroke="#8e96a6" stroke-width="1.2" stroke-linecap="round" opacity=".6"/><path d="M0.4 11 L3.6 13.2 L0.4 15.4 Z" fill="#9ccf0c"/></svg></div>
<div class="t" style="top:256px;height:14px;line-height:14px;font-size:10.6px;color:#fff;-webkit-text-stroke:0.3px #fff;left:773.4px;">The World Cup</div>
<div class="t" style="top:272px;height:12px;line-height:12px;font-size:9.3px;color:#fff;-webkit-text-stroke:0.5px #fff;left:772.8px;">All about the</div>
<div class="t" style="top:283px;height:12px;line-height:12px;font-size:9.3px;color:#fff;-webkit-text-stroke:0.5px #fff;left:772.8px;">World &nbsp;Cup and</div>
<div class="t" style="top:293px;height:12px;line-height:12px;font-size:9.3px;color:#fff;-webkit-text-stroke:0.5px #fff;left:772.8px;letter-spacing:0.25px;">more...</div>
</div></body></html>
